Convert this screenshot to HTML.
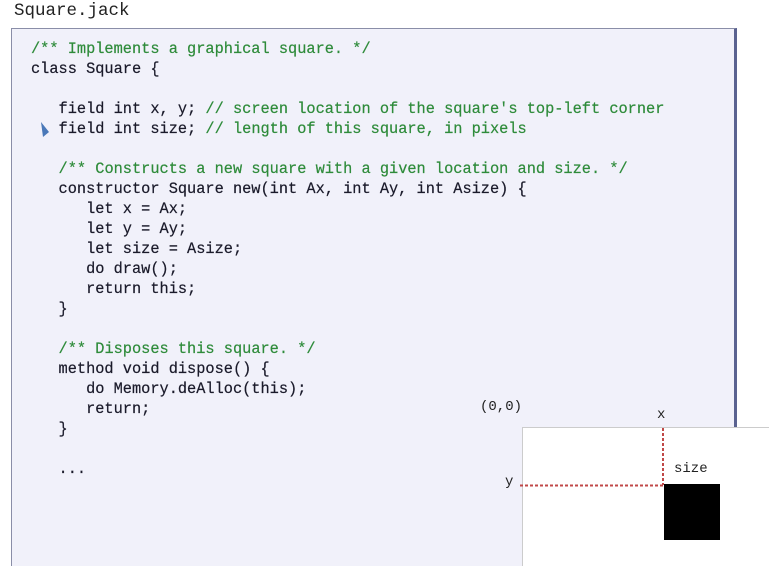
<!DOCTYPE html><html><head><style>
html,body{margin:0;width:769px;height:566px;overflow:hidden}
body{background:#fff;position:relative;font-family:"Liberation Mono",monospace}
.t{position:absolute;left:14px;top:1px;font-size:17.5px;color:#222}
.box{position:absolute;left:11px;top:28px;width:722px;height:540px;background:#f1f1fa;border-left:1px solid #8a8ea8;border-top:1px solid #8a8ea8;border-right:3px solid #5a6290}
pre{position:absolute;left:31px;top:39px;margin:0;font-size:15.3px;line-height:20px;color:#1a1a2a;font-family:"Liberation Mono",monospace;-webkit-text-stroke:0.2px #1a1a2a}
.c{color:#2e8b3a;-webkit-text-stroke:0.2px #2e8b3a}
.scr{position:absolute;left:522px;top:427px;width:260px;height:145px;background:#fff;border:1px solid #ccc}
.l{position:absolute;font-size:14px;color:#222}
</style></head><body>
<div class="t">Square.jack</div>
<div class="box"></div>
<pre><span class="c">/** Implements a graphical square. */</span>
class Square {

   field int x, y; <span class="c">// screen location of the square's top-left corner</span>
   field int size; <span class="c">// length of this square, in pixels</span>

   <span class="c">/** Constructs a new square with a given location and size. */</span>
   constructor Square new(int Ax, int Ay, int Asize) {
      let x = Ax;
      let y = Ay;
      let size = Asize;
      do draw();
      return this;
   }

   <span class="c">/** Disposes this square. */</span>
   method void dispose() {
      do Memory.deAlloc(this);
      return;
   }

   ...</pre>
<svg style="position:absolute;left:38px;top:121px" width="14" height="20"><path d="M3 1 L11 11 L5 16 Z" fill="#4a78b8"/></svg>
<div class="scr"></div>
<div class="l" style="left:480px;top:399px">(0,0)</div>
<div class="l" style="left:657px;top:407px">x</div>
<div class="l" style="left:505px;top:474px">y</div>
<div class="l" style="left:674px;top:461px">size</div>
<svg style="position:absolute;left:0;top:0" width="769" height="566"><path d="M663 428 V485 M520 485.5 H663" stroke="#c04848" stroke-width="2" stroke-dasharray="3 2" fill="none"/><rect x="664" y="484" width="56" height="56" fill="#000"/></svg>
</body></html>
